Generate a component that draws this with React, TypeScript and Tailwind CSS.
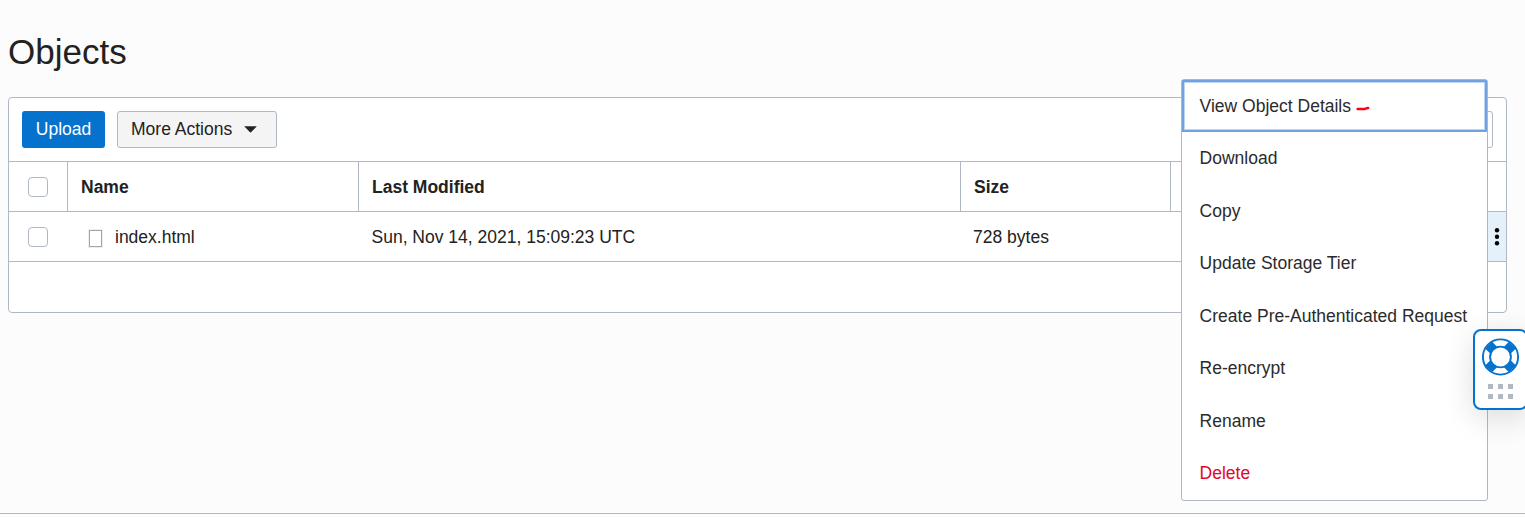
import React from "react";

const menuItems = [
  "Download",
  "Copy",
  "Update Storage Tier",
  "Create Pre-Authenticated Request",
  "Re-encrypt",
  "Rename",
];

function Checkbox() {
  return (
    <div className="flex w-[58px] shrink-0 items-center pl-[19px]">
      <span className="size-5 rounded-[4px] border border-[#b0b8c4] bg-white" role="checkbox" aria-checked="false" />
    </div>
  );
}

function LifeBuoyIcon() {
  return (
    <svg width="38" height="38" viewBox="0 0 38 38" fill="none" className="shrink-0">
      <circle cx="18.5" cy="19" r="17.6" stroke="#0572ce" strokeWidth="1.9" />
      <path d="M6.6 7.1L30.4 30.9M30.4 7.1L6.6 30.9" stroke="#0572ce" strokeWidth="9.8" />
      <circle cx="18.5" cy="19" r="10.4" fill="white" stroke="#0572ce" strokeWidth="1.9" />
    </svg>
  );
}

function ActionMenu() {
  return (
    <div className="absolute left-[1181px] top-[79px] h-[422px] w-[307px] rounded-[3px] border border-[#b0b8c4] bg-white text-[#2b2b2b]">
      <div className="flex h-[52px] items-center border-2 border-[#70a2df] pl-[15.6px] shadow-[inset_0_0_0_1px_#bdd5f2]">
        <span>View Object Details</span>
        <svg width="14" height="8" viewBox="0 0 14 8" fill="none" className="ml-[5px] mt-1">
          <path d="M1.6 5H9L10.5 4.2L12.2 4" stroke="#ff0010" strokeWidth="2.4" strokeLinecap="round" strokeLinejoin="round" />
        </svg>
      </div>
      <div className="pl-[17.6px] pt-[0.4px]">
        {menuItems.map((item) => (
          <div key={item} className="flex h-[52.5px] items-center">{item}</div>
        ))}
        <div className="flex h-[52px] items-center text-[#e2062c]">Delete</div>
      </div>
    </div>
  );
}

function HelpWidget() {
  return (
    <div className="absolute left-[1473px] top-[329px] flex h-[81px] w-[55px] flex-col items-center rounded-[8px] border-2 border-[#0572ce] bg-white pt-[7px] shadow-[0_8px_30px_rgba(0,0,0,0.13)]">
      <LifeBuoyIcon />
      <div className="mt-2 grid grid-cols-3 gap-[5px]">
        {[0, 1, 2, 3, 4, 5].map((dot) => (
          <span key={dot} className="size-[5px] bg-[#b1b8c2]" />
        ))}
      </div>
    </div>
  );
}

export default function App() {
  return (
    <div className="relative flex h-[517px] w-[1525px] flex-col overflow-hidden whitespace-nowrap bg-[#fcfcfc] font-['Liberation_Sans',Arial,sans-serif] text-[17.5px] leading-[21px] text-[#222]">
      <h1 className="h-[97px] pl-2 pt-8 text-[35px] leading-[40px]">Objects</h1>
      <section className="ml-2 flex h-[216px] w-[1499px] flex-col overflow-hidden rounded-[4px] border border-[#b0b8c4] bg-white">
        <div className="flex h-[64px] items-start border-b border-[#b0b8c4] px-[13px] pt-[13px]">
          <button className="h-[37px] w-[83px] rounded-[3px] bg-[#0572ce] text-white">Upload</button>
          <button className="ml-3 flex h-[37px] w-[160px] items-center rounded-[3px] border border-[#b0b8c4] bg-[#f4f4f4] pl-[13px]">
            <span>More Actions</span>
            <svg width="13" height="7" viewBox="0 0 13 7" className="ml-3">
              <path d="M0.2 0.3H12.8L6.5 6.8Z" fill="#222" />
            </svg>
          </button>
          <div className="ml-auto h-[37px] w-[260px] rounded-[3px] border border-[#b0b8c4]" />
        </div>
        <div className="flex h-[50px] border-b border-[#b0b8c4] font-bold">
          <Checkbox />
          <div className="flex w-[291px] items-center border-l border-[#b0b8c4] pl-[13px] pt-px">Name</div>
          <div className="flex w-[602px] items-center border-l border-[#b0b8c4] pl-[13px] pt-px">Last Modified</div>
          <div className="flex w-[210px] items-center border-l border-[#b0b8c4] pl-[13px] pt-px">Size</div>
          <div className="flex-1 border-l border-[#b0b8c4]" />
        </div>
        <div className="flex h-[50px] border-b border-[#b0b8c4]">
          <Checkbox />
          <div className="flex w-[291px] items-center pl-[22px] pt-px">
            <span className="mt-0.5 h-[17px] w-[13px] border border-[#a5a5a5] shadow-[0_0_0_1px_#eeeeee]" />
            <span className="ml-[13px]">index.html</span>
          </div>
          <div className="flex w-[602px] items-center pl-[13.5px] pt-px">Sun, Nov 14, 2021, 15:09:23 UTC</div>
          <div className="flex w-[210px] items-center pl-[13px] pt-px">728 bytes</div>
          <div className="ml-auto flex w-10 items-center justify-end bg-[#e4f1fb] pr-[7px]">
            <svg width="4" height="18" viewBox="0 0 4 18" fill="#000" className="overflow-visible">
              <circle cx="2" cy="2.3" r="2.2" />
              <circle cx="2" cy="8.8" r="2.2" />
              <circle cx="2" cy="15.3" r="2.2" />
            </svg>
          </div>
        </div>
      </section>
      <div className="mt-auto h-1 border-t border-[#b8b8b8]" />
      <ActionMenu />
      <HelpWidget />
    </div>
  );
}
